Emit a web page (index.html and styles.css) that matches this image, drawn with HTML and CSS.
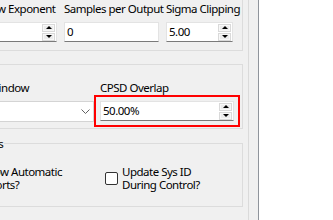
FILE: index.html
```html
<!DOCTYPE html>
<html lang="en">
  <head>
    <meta charset="UTF-8" />
    <title>Control Settings</title>
    <link rel="stylesheet" href="styles.css">
  </head>
  <body>
    <div class="panel">
      <div class="sheet">
        <!-- Signal processing -->
        <fieldset class="grp grp-first">
          <div class="row">
            <div class="field col-a">
              <label>Window Exponent</label>
              <div class="spin">
                <span class="val"></span>
                <span class="btns"><i class="up"></i><i class="dn"></i></span>
              </div>
            </div>
            <div class="field col-b">
              <label>Samples per Output</label>
              <div class="spin"><span class="val">0</span></div>
            </div>
            <div class="field col-c">
              <label>Sigma Clipping</label>
              <div class="spin">
                <span class="val">5.00</span>
                <span class="btns"><i class="up"></i><i class="dn"></i></span>
              </div>
            </div>
          </div>
        </fieldset>

        <!-- CPSD -->
        <fieldset class="grp grp-cpsd">
          <div class="row">
            <div class="field col-wide">
              <label>CPSD Window</label>
              <div class="combo">
                <svg width="9" height="5" viewBox="0 0 9 5"><polyline points="0.5,0.5 4.5,4.5 8.5,0.5" fill="none" stroke="#606060" stroke-width="1"/></svg>
              </div>
            </div>
            <div class="field col-overlap">
              <label>CPSD Overlap</label>
              <div class="mark">
                <div class="spin">
                  <span class="val">50.00%</span>
                  <span class="btns"><i class="up"></i><i class="dn"></i></span>
                </div>
              </div>
            </div>
          </div>
        </fieldset>

        <!-- Options -->
        <fieldset class="grp grp-opts">
          <legend>Options</legend>
          <div class="row">
            <label class="check check-first"><span class="box"></span><span>Allow Automatic<br>Aborts?</span></label>
            <label class="check"><span class="box"></span><span>Update Sys ID<br>During Control?</span></label>
          </div>
        </fieldset>
      </div>
    </div>
  </body>
</html>
```

FILE: styles.css
```css
* {
  box-sizing: border-box;
}

body {
  margin: 0;
  background: #fff;
  color: #000;
  font-family: "Noto Sans", "Open Sans", sans-serif;
  font-size: 11.5px;
  letter-spacing: -0.5px;
  overflow: hidden;
}

.panel {
  width: 259px;
  height: 220px;
  background: #f0f0f0;
  border-right: 1px solid #8f949b;
  overflow: hidden;
}

.sheet {
  margin-left: -70px;
  width: 319px;
  height: 220px;
  padding-right: 5px;
  border-right: 1px solid #dadada;
}

.grp {
  margin: 0;
  min-width: 0;
  border: 1px solid #dcdcdc;
  padding: 0 0 0 28px;
}

.grp-first {
  border-top: 0;
  padding-top: 1px;
  padding-bottom: 8px;
}

.grp-cpsd {
  margin-top: 13px;
  padding-top: 15px;
  padding-bottom: 6px;
}

.grp-opts {
  margin-top: 7px;
  padding-top: 14px;
  padding-bottom: 15px;
  padding-left: 38px;
}

legend {
  padding: 0 1px;
  margin-left: -6px;
  line-height: 15px;
}

.row {
  display: flex;
  gap: 7px;
}

.field {
  display: flex;
  flex-direction: column;
  gap: 6px;
}

.field label {
  line-height: 15px;
  white-space: nowrap;
}

.col-a {
  width: 98px;
}
.col-a label {
  padding-left: 6px;
}
.col-b {
  width: 95px;
}
.col-c {
  width: 67px;
}
.col-wide {
  width: 135px;
}
.col-overlap {
  width: 134px;
  margin-left: -1px;
}

/* numeric up/down */
.spin {
  display: flex;
  align-items: center;
  height: 20px;
  padding: 0 1px 0 2px;
  background: #fff;
  border: 1px solid #e3e3e3;
  border-bottom-color: #7a7a7a;
}

.val {
  flex: 1;
  line-height: 18px;
}

.btns {
  display: flex;
  flex-direction: column;
  gap: 1px;
  width: 13px;
}

.btns i {
  display: flex;
  align-items: center;
  justify-content: center;
  height: 8px;
  background: #ececec;
  border: 1px solid #d9d9d9;
  box-shadow: inset 0 0 0 1px #f8f8f8;
}

.btns i::before {
  content: "";
  border-left: 3px solid transparent;
  border-right: 3px solid transparent;
}
.btns .up::before {
  border-bottom: 3px solid #000;
}
.btns .dn::before {
  border-top: 3px solid #000;
}

.combo {
  display: flex;
  align-items: center;
  justify-content: flex-end;
  height: 21px;
  padding-right: 3px;
  background: #fff;
  border: 1px solid #d4d4d4;
}

.combo svg {
  display: block;
}

/* red highlight around the edited field */
.mark {
  margin: -6px;
  padding: 4px;
  border: 2px solid #ff0000;
}

/* checkboxes */
.check {
  display: flex;
  align-items: center;
  gap: 4px;
  line-height: 13px;
}

.check-first {
  width: 129px;
}

.check-first span:last-child {
  margin-left: -4px;
}

.box {
  flex: none;
  width: 13px;
  height: 13px;
  background: #fff;
  border: 1px solid #333;
  border-radius: 2px;
}
```
